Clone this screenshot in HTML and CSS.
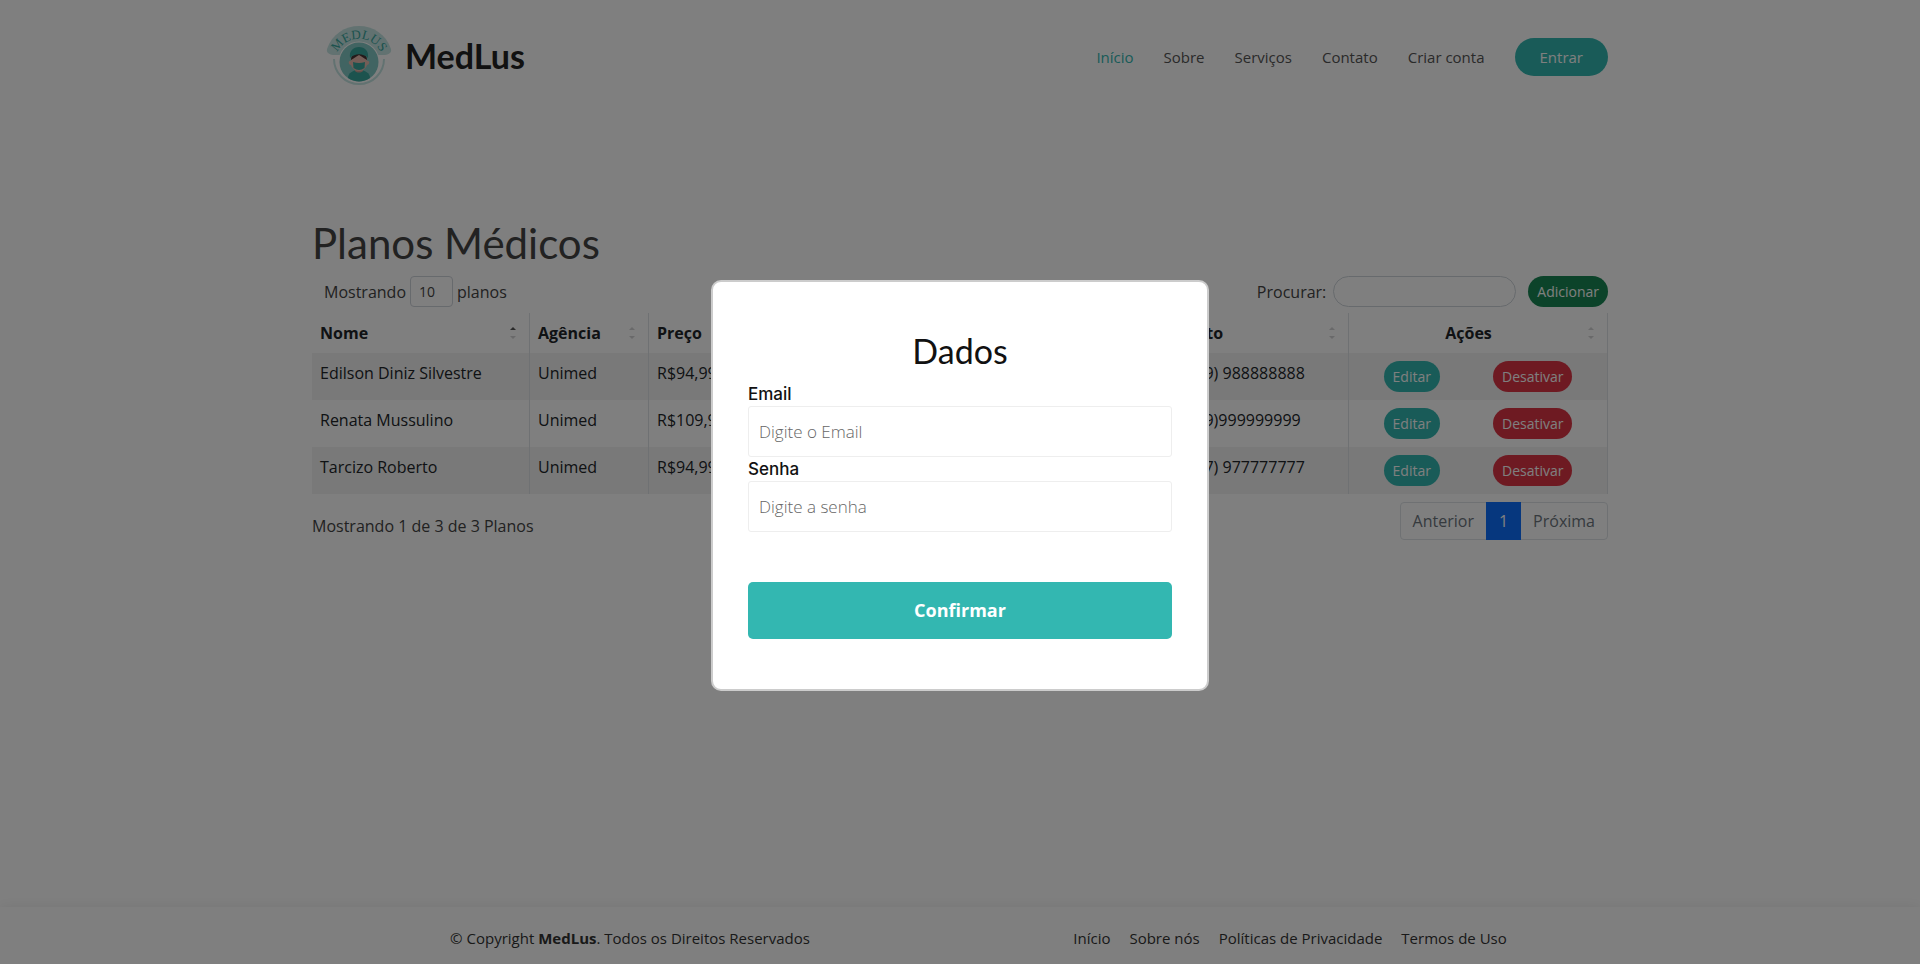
FILE: index.html
```html
<!DOCTYPE html>
<html lang="pt-BR">
<head>
<meta charset="utf-8">
<meta name="viewport" content="width=device-width, initial-scale=1">
<title>MedLus - Planos Médicos</title>
<link rel="stylesheet" href="styles.css">
</head>
<body>
<svg class="defs" aria-hidden="true">
  <symbol id="sort" viewBox="0 0 6 14"><path class="up" d="M0 4L3 1l3 3z"/><path class="down" d="M0 10h6l-3 3z"/></symbol>
</svg>
<div class="page">
  <header class="header">
    <div class="container header-row">
      <a class="brand" href="#">
        <svg class="brand-logo" viewBox="0 0 66 62" role="img" aria-label="Logo MedLus">
          <path d="M8 34A25 25 0 1 0 58 34" fill="none" stroke="#c5e5e2" stroke-width="2"/>
          <path d="M1 24C6 9 19 1 33 1s27 8 32 23c1 4-3 6-8 6H9c-5 0-9-2-8-6z" fill="#c5e5e2"/>
          <circle cx="33" cy="37" r="20.500" fill="#fff"/>
          <circle cx="33" cy="37" r="19.500" fill="#82c9c4"/>
          <path d="M22 53c0-5 5-8 11-8s11 3 11 8a19.500 19.500 0 0 1-22 0z" fill="#38a69d"/>
          <path d="M29 43h8v3c-2 2-6 2-8 0z" fill="#c99e94"/>
          <path d="M26 31c2-3 12-3 14 0l1 5c3-1 3 4 0 4-2 5-5 6-8 6s-6-1-8-6c-3 0-3-5 0-4z" fill="#e8bbae"/>
          <path d="M25 35c0-4 2-6 8-7 6 1 8 3 8 7-3-2-5-3-8-5-3 2-5 3-8 5z" fill="#493534"/>
          <path d="M24 33c-1-7 3-11 9-11s10 4 9 11c-5-5-13-5-18 0z" fill="#38a69d"/>
          <path d="M27 37q6 2 12 0l-.5 6q-5.500 4-11 0z" fill="#38a69d"/>
          <path id="arc" d="M10 31A24 24 0 0 1 56 31" fill="none"/>
          <text class="brand-arc"><textPath href="#arc" startOffset="50%" text-anchor="middle">MEDLUS</textPath></text>
        </svg>
        <span class="brand-name">MedLus</span>
      </a>
      <nav class="nav" aria-label="Principal">
        <a class="nav-link active" href="#">Início</a>
        <a class="nav-link" href="#">Sobre</a>
        <a class="nav-link" href="#">Serviços</a>
        <a class="nav-link" href="#">Contato</a>
        <a class="nav-link" href="#">Criar conta</a>
        <a class="nav-enter" href="#">Entrar</a>
      </nav>
    </div>
  </header>

  <main class="container main">
    <h1 class="title">Planos Médicos</h1>
    <div class="toolbar">
      <label class="length">Mostrando
        <select class="length-select"><option>10</option><option>25</option></select>
        planos</label>
      <div class="tools">
        <label class="search">Procurar: <input class="search-input" type="search"></label>
        <button class="btn btn-add" type="button">Adicionar</button>
      </div>
    </div>
    <table class="plans">
      <colgroup><col class="c-name"><col class="c-agency"><col class="c-price"><col class="c-contact"><col class="c-actions"></colgroup>
      <thead>
        <tr>
          <th scope="col"><div class="head"><span>Nome</span><svg class="sort asc"><use href="#sort"/></svg></div></th>
          <th scope="col"><div class="head"><span>Agência</span><svg class="sort"><use href="#sort"/></svg></div></th>
          <th scope="col"><div class="head"><span>Preço</span><svg class="sort"><use href="#sort"/></svg></div></th>
          <th scope="col"><div class="head"><span>Contato</span><svg class="sort"><use href="#sort"/></svg></div></th>
          <th scope="col"><div class="head center"><span>Ações</span><svg class="sort"><use href="#sort"/></svg></div></th>
        </tr>
      </thead>
      <tbody>
        <tr><td>Edilson Diniz Silvestre</td><td>Unimed</td><td>R$94,99</td><td>+55 (19) 988888888</td>
          <td><div class="actions"><button class="btn btn-edit" type="button">Editar</button><button class="btn btn-off" type="button">Desativar</button></div></td></tr>
        <tr><td>Renata Mussulino</td><td>Unimed</td><td>R$109,99</td><td>+55 (19)999999999</td>
          <td><div class="actions"><button class="btn btn-edit" type="button">Editar</button><button class="btn btn-off" type="button">Desativar</button></div></td></tr>
        <tr><td>Tarcizo Roberto</td><td>Unimed</td><td>R$94,99</td><td>+55 (17) 977777777</td>
          <td><div class="actions"><button class="btn btn-edit" type="button">Editar</button><button class="btn btn-off" type="button">Desativar</button></div></td></tr>
      </tbody>
    </table>
    <div class="table-foot">
      <p class="info">Mostrando 1 de 3 de 3 Planos</p>
      <nav class="pages" aria-label="Paginação">
        <a class="page-link" href="#">Anterior</a>
        <a class="page-link current" href="#">1</a>
        <a class="page-link" href="#">Próxima</a>
      </nav>
    </div>
  </main>

  <footer class="footer">
    <div class="footer-row">
      <p class="copy">© Copyright <strong>MedLus</strong>. Todos os Direitos Reservados</p>
      <nav class="footer-nav" aria-label="Rodapé">
        <a href="#">Início</a>
        <a href="#">Sobre nós</a>
        <a href="#">Políticas de Privacidade</a>
        <a href="#">Termos de Uso</a>
      </nav>
    </div>
  </footer>
</div>

<div class="overlay">
  <form class="modal" role="dialog" aria-modal="true" aria-labelledby="modal-title">
    <h2 class="modal-title" id="modal-title">Dados</h2>
    <label class="field-label" for="email">Email</label>
    <input class="field" id="email" type="email" placeholder="Digite o Email">
    <label class="field-label" for="senha">Senha</label>
    <input class="field" id="senha" type="password" placeholder="Digite a senha">
    <button class="confirm" type="submit">Confirmar</button>
  </form>
</div>
</body>
</html>
```
FILE: styles.css
```css
*, *::before, *::after { box-sizing: border-box; }
body { margin: 0; background: #fff; color: #444; font: 16px/24px "Open Sans", "Noto Sans", sans-serif; }
a { color: inherit; text-decoration: none; }
p, h1, h2 { margin: 0; }
button, input, select { font-family: inherit; }
.defs { display: none; }

.page { min-height: 100vh; display: flex; flex-direction: column; }
.container { width: 100%; max-width: 1320px; margin: 0 auto; padding: 0 12px; }

.header { padding: 25px 0 23px; }
.header-row { display: flex; align-items: center; justify-content: space-between; }
.brand { display: flex; align-items: center; gap: 13px; padding-left: 14px; }
.brand-logo { width: 66px; height: 62px; overflow: visible; }
.brand-arc { font: 13px "Liberation Serif", serif; fill: #38a69d; }
.brand-name { font: 700 34px/40px Lato, sans-serif; color: #222; }
.nav { display: flex; align-items: center; gap: 30px; padding-top: 2px; font-size: 15px; color: #555; }
.nav-link.active { color: #33b7b1; }
.nav-enter { padding: 7px 25px; border-radius: 50px; background: #33b7b1; color: #fff; }

.main { flex: 1; padding-top: 109px; }
.title { font: 400 42px/48px Lato, sans-serif; margin-bottom: 9px; }
.toolbar { display: flex; justify-content: space-between; align-items: center; padding-left: 12px; margin-bottom: 6px; }
.length, .search { display: flex; align-items: center; gap: 4px; }
.length-select { width: 43px; height: 31px; padding: 4px 8px; border: 1px solid #ced4da; border-radius: 4px; background: #fff; color: #444; font-size: 14px; appearance: none; }
.tools { display: flex; align-items: center; gap: 12px; }
.search { gap: 7px; }
.search-input { width: 183px; height: 31px; padding: 4px 12px; border: 1px solid #ced4da; border-radius: 50px; background: #fff; font-size: 14px; appearance: none; }
.btn { height: 31px; padding: 0 9px; border: 0; border-radius: 50px; color: #fff; font-size: 14px; line-height: 21px; }
.btn-add { background: #198754; }
.btn-edit { background: #33b7b1; }
.btn-off { background: #dc3545; }

.plans { width: 100%; table-layout: fixed; border-collapse: separate; border-spacing: 0; color: #212529; }
.c-name { width: 218px; }
.c-agency { width: 119px; }
.c-contact { width: 198px; }
.c-actions { width: 259px; }
.plans th, .plans td { padding: 8px; border-right: 1px solid #dee2e6; text-align: left; vertical-align: top; }
.plans tbody tr:nth-child(odd) { background: #f2f2f2; }
.head { display: flex; align-items: center; justify-content: space-between; padding-right: 5px; }
.head.center span { flex: 1; padding-right: 8px; text-align: center; }
.sort { --up: #d3d3d4; width: 6px; height: 14px; }
.sort.asc { --up: #555; }
.up { fill: var(--up); }
.down { fill: #d3d3d4; }
.actions { display: flex; justify-content: space-around; }

.table-foot { display: flex; justify-content: space-between; align-items: center; margin-top: 8px; }
.info { padding-top: 10px; }
.pages { display: flex; border: 1px solid #dee2e6; border-radius: 4px; color: #6c757d; }
.page-link { padding: 6px 12px; }
.page-link.current { margin: -1px 0; padding: 7px 13px; background: #0d6efd; color: #fff; }

.footer { padding: 19px 0 14px; background: #fff; box-shadow: 0 2px 15px rgba(0, 0, 0, .1); color: #333; font-size: 15px; }
.footer-row { display: grid; grid-template-columns: 1fr 1fr; max-width: 1320px; margin: 0 auto; text-align: center; }
.footer-nav { display: flex; justify-content: center; gap: 19px; }

.overlay { position: fixed; inset: 0; display: flex; align-items: center; justify-content: center; padding-top: 6px; background: rgba(0, 0, 0, .5); }
.modal { width: 498px; max-width: 100%; display: flex; flex-direction: column; padding: 49px 35px 50px; border: 2px solid #ccc; border-radius: 10px; background: #fff; color: #111; }
.modal-title { font: 400 34px/40px Lato, sans-serif; text-align: center; margin-bottom: 11px; }
.field-label { font: 500 17px/24px Inter, sans-serif; }
.field { height: 51px; padding: 0 10px; border: 1px solid #eee; border-radius: 3px; background: #fff; color: #444; font-size: 17px; font-weight: 300; }
.field::placeholder { color: #666; }
.confirm { height: 57px; margin-top: 50px; border: 0; border-radius: 5px; background: #33b7b1; color: #fff; font-size: 18px; font-weight: 700; }
```
